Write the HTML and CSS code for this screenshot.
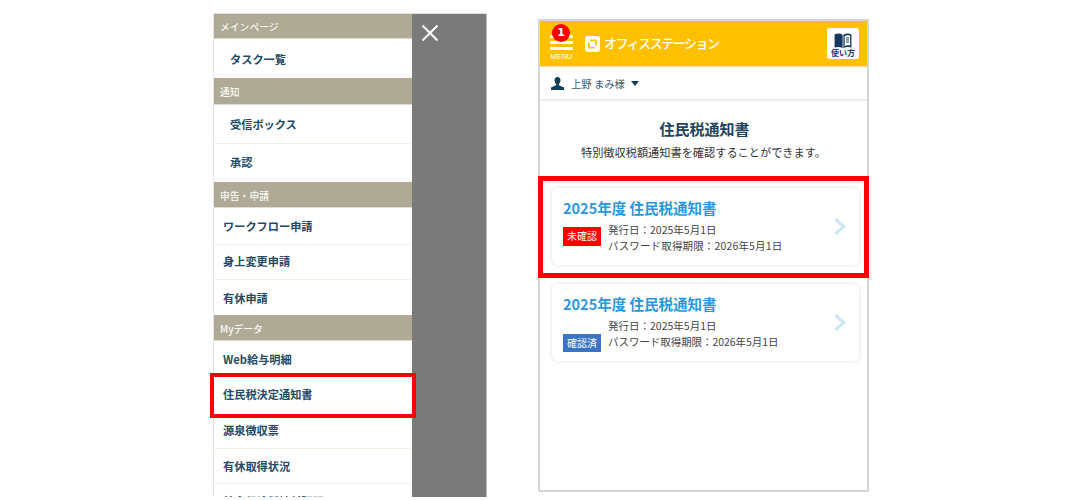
FILE: index.html
```html
<!DOCTYPE html>
<html lang="ja">
<head>
<meta charset="utf-8">
<title>住民税通知書</title>
<link rel="stylesheet" href="styles.css">
</head>
<body>
<main class="stage">
  <section class="menu-phone">
    <nav class="menu">
      <div class="menu-head head-first">メインページ</div>
      <a class="menu-item tall first-tall indent">タスク一覧</a>
      <div class="menu-head head-small">通知</div>
      <a class="menu-item tall indent line">受信ボックス</a>
      <a class="menu-item tall short indent">承認</a>
      <div class="menu-head">申告・申請</div>
      <a class="menu-item line low first-row">ワークフロー申請</a>
      <a class="menu-item line high2">身上変更申請</a>
      <a class="menu-item low">有休申請</a>
      <div class="menu-head">Myデータ</div>
      <a class="menu-item low">Web給与明細</a>
      <a class="menu-item hot-item">住民税決定通知書</a>
      <a class="menu-item line high2">源泉徴収票</a>
      <a class="menu-item line high1">有休取得状況</a>
      <a class="menu-item">社会保険料納付証明</a>
    </nav>
    <div class="overlay">
      <svg class="close" width="18" height="18" viewBox="0 0 18 18"><path d="M1.500 1.500 16.500 16.500M16.500 1.500 1.500 16.500" stroke="#fff" stroke-width="2" fill="none"/></svg>
    </div>
    <div class="menu-highlight"></div>
  </section>

  <section class="app-phone">
    <header class="app-bar">
      <div class="burger">
        <span class="bar"></span><span class="bar"></span><span class="bar"></span>
        <span class="menu-label">MENU</span>
        <span class="badge">1</span>
      </div>
      <svg class="logo" width="15" height="16" viewBox="0 0 15 16"><rect width="15" height="16" rx="3" fill="#fff"/><path d="M5 4.200h5.800v5.600M3.900 6.400v5.400h6" fill="none" stroke="#ffc000" stroke-width="1.600"/></svg>
      <span class="brand">オフィスステーション</span>
      <div class="guide">
        <svg width="18" height="15" viewBox="0 0 18 16"><path d="M0 1.500C3 .3 6 .3 8.600 1.800V16C6 14.600 3 14.600 0 15.400z" fill="#17375e"/><path d="M9.400 1.800C12 .3 15 .3 18 1.500v13.900c-3-.8-6-.8-8.600.6z" fill="#17375e"/><path d="M10.800 3.200c1.900-.8 3.900-.9 5.800-.4v10.600c-2-.4-3.900-.3-5.800.4z" fill="#fff"/><path d="M12 5.200h3.500M12 7.400h3.500M12 9.600h3.500" stroke="#17375e" stroke-width="1"/></svg>
        <span>使い方</span>
      </div>
    </header>
    <div class="user-bar">
      <svg width="13" height="13" viewBox="0 0 13 13"><path d="M6.500 0C8.400 0 9.500 1.400 9.500 3.300 9.500 5 8.800 6.300 7.900 7v1.300L13 10.600V13H0v-2.400l5.100-2.300V7C4.200 6.300 3.500 5 3.500 3.300 3.500 1.400 4.600 0 6.500 0z" fill="#123f5a"/></svg>
      <span class="user-name">上野 まみ様</span>
      <span class="caret"></span>
    </div>
    <div class="content">
      <h1 class="title">住民税通知書</h1>
      <p class="lead">特別徴収税額通知書を確認することができます。</p>
      <div class="cards">
        <article class="card">
          <h2 class="card-title">2025年度 住民税通知書</h2>
          <div class="card-body body-center">
            <span class="status status-new">未確認</span>
            <div class="dates">
              <div>発行日：2025年5月1日</div>
              <div class="wide">パスワード取得期限：2026年5月1日</div>
            </div>
          </div>
          <svg class="chev" width="12" height="17" viewBox="0 0 13 18"><path d="M1.500 1 10.500 9 1.500 17" fill="none" stroke="#c9e5f7" stroke-width="3.400"/></svg>
        </article>
        <article class="card">
          <h2 class="card-title">2025年度 住民税通知書</h2>
          <div class="card-body">
            <span class="status status-done">確認済</span>
            <div class="dates">
              <div>発行日：2025年5月1日</div>
              <div class="tight">パスワード取得期限：2026年5月1日</div>
            </div>
          </div>
          <svg class="chev" width="12" height="17" viewBox="0 0 13 18"><path d="M1.500 1 10.500 9 1.500 17" fill="none" stroke="#c9e5f7" stroke-width="3.400"/></svg>
        </article>
        <div class="card-highlight"></div>
      </div>
    </div>
  </section>
</main>
</body>
</html>
```
FILE: styles.css
```css
* { box-sizing: border-box; }
html, body { margin: 0; height: 100%; background: #fff; overflow: hidden; }
body { font-family: "Noto Sans CJK JP", "Noto Sans", sans-serif; color: #333; }
.stage { display: flex; align-items: flex-start; width: 1080px; height: 500px; padding-left: 213px; }

.menu-phone { position: relative; display: flex; width: 275px; height: 484px; margin-top: 13px; border-top: 1px solid #e4e4e4; border-left: 1px solid #e4e4e4; }
.menu { width: 198px; height: 483px; overflow: hidden; background: #fff; display: flex; flex-direction: column; }
.menu-head { flex: none; height: 26px; line-height: 28px; padding-left: 6px; background: #aeaa96; color: #f9f8f3; font-size: 9.800px; font-weight: 500; border-bottom: 1px solid #dedcd0; }
.head-first { height: 25px; line-height: 26px; }
.head-small { height: 27px; line-height: 28px; }
.menu-item { flex: none; display: block; height: 35px; line-height: 35px; padding-left: 9px; font-size: 11.200px; font-weight: 700; color: #1f4a66; }
.menu-item.line { border-bottom: 1px solid #f3f1e4; }
.menu-item.tall { height: 39px; line-height: 39px; padding-left: 16px; }
.menu-item.first-tall { line-height: 40px; }
.menu-item.short { height: 38px; line-height: 37px; }
.menu-item.first-row { height: 37px; }
.menu-item.low { line-height: 36px; }
.menu-item.high1 { line-height: 34px; }
.menu-item.high2 { line-height: 33px; }
.menu-item.hot-item { height: 38px; line-height: 36px; }
.menu-highlight { position: absolute; left: -4px; top: 359px; width: 206px; height: 45px; border: 4px solid #f00; }
.overlay { width: 75px; height: 483px; background: #7a7a7a; padding: 10px 0 0 9px; border-right: 1px solid #bbb; }
.close { display: block; }

.app-phone { display: flex; flex-direction: column; width: 331px; height: 473px; margin: 19px 0 0 50px; border: 2px solid #d6d6d6; background: #fff; }
.app-bar { position: relative; display: flex; align-items: center; flex: none; height: 46px; background: #ffc000; border-bottom: 1px solid #ecdca8; }
.burger { position: relative; width: 23px; height: 40px; margin-left: 10px; padding-top: 11px; display: flex; flex-direction: column; gap: 2.500px; align-items: stretch; }
.bar { display: block; height: 3.500px; background: #fff; border-radius: 1px; }
.menu-label { font-size: 7.500px; line-height: 8px; color: #fff; text-align: center; margin-top: 0; font-family: "Liberation Sans", sans-serif; }
.badge { position: absolute; left: 2px; top: 0; width: 18px; height: 18px; border-radius: 50%; background: #f00; color: #fff; font-size: 11px; line-height: 18px; font-weight: 700; text-align: center; font-family: "DejaVu Sans", sans-serif; }
.logo { flex: none; margin-left: 12px; }
.brand { margin: 0 0 2px 4px; color: #fff; font-size: 13px; font-weight: 500; letter-spacing: -1.500px; }
.guide { position: absolute; right: 8px; top: 7px; width: 32px; height: 31px; background: #fff; border-radius: 3px; display: flex; flex-direction: column; align-items: center; padding-top: 5px; }
.guide svg { flex: none; }
.guide span { font-size: 8px; line-height: 9px; font-weight: 700; color: #17375e; white-space: nowrap; }
.user-bar { display: flex; align-items: center; flex: none; height: 33px; padding-left: 11px; border-bottom: 1px solid #e6e6e6; box-shadow: 0 1px 2px rgba(0,0,0,.06); }
.user-name { margin-left: 7px; font-size: 10.300px; color: #3b5a78; }
.caret { margin-left: 6px; width: 0; height: 0; border-left: 4.500px solid transparent; border-right: 4.500px solid transparent; border-top: 5.500px solid #123f5a; }
.content { flex: 1; padding-top: 17px; }
.title { margin: 0; padding-left: 2px; text-align: center; font-size: 15px; line-height: 24px; font-weight: 700; color: #1c4560; }
.lead { margin: 1px 0 0; text-align: center; font-size: 11.200px; line-height: 20px; color: #333; }
.cards { position: relative; display: flex; flex-direction: column; gap: 19px; margin-top: 26px; padding: 0 8px 0 12px; }
.card { position: relative; height: 77px; padding: 8px 11px; background: #fff; border-radius: 6px; box-shadow: 0 0 4px rgba(0,0,0,.14); }
.card-title { margin: 0; font-size: 14.500px; line-height: 24px; font-weight: 700; color: #2a97dd; }
.card-body { display: flex; align-items: flex-end; gap: 7px; margin-top: 2px; }
.body-center { align-items: center; }
.status { flex: none; width: 38px; height: 18px; line-height: 17px; text-align: center; font-size: 10px; color: #fff; }
.status-new { background: #f00; height: 19px; line-height: 18px; margin-bottom: 4px; }
.status-done { background: #3b74c4; margin-bottom: -2px; }
.dates { font-size: 10.500px; line-height: 16px; color: #444; }
.wide { letter-spacing: .15px; }
.tight { letter-spacing: -.05px; }
.chev { position: absolute; right: 13px; top: 30px; }
.card-highlight { position: absolute; left: -2px; top: -12px; width: 331px; height: 102px; border: 5px solid #f00; pointer-events: none; }
```
